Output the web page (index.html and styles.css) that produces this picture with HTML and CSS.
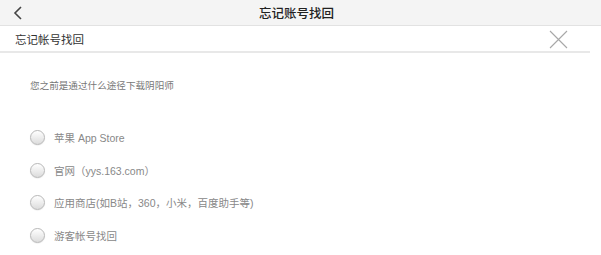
FILE: index.html
```html
<!DOCTYPE html>
<html lang="zh">
<head>
    <meta charset="UTF-8">
    <title>忘记账号找回</title>
    <link rel="stylesheet" href="styles.css">
</head>
<body>
    <div class="topbar">
        <span class="back">
            <svg width="10" height="14" viewBox="0 0 10 14"><path d="M8 1 L2 7 L8 13" fill="none" stroke="#444" stroke-width="1.6"/></svg>
        </span>
        <h1 class="title">忘记账号找回</h1>
    </div>

    <div class="panel-head">
        <span class="panel-title">忘记帐号找回</span>
        <span class="close">
            <svg width="19" height="19" viewBox="0 0 19 19"><path d="M1 1 L18 18 M18 1 L1 18" stroke="#a8a8a8" stroke-width="1.1"/></svg>
        </span>
    </div>

    <div class="content">
        <p class="question">您之前是通过什么途径下载阴阳师</p>
        <ul class="options">
            <li class="option"><span class="radio"></span>苹果 App Store</li>
            <li class="option"><span class="radio"></span>官网（yys.163.com）</li>
            <li class="option"><span class="radio"></span>应用商店(如B站，360，小米，百度助手等)</li>
            <li class="option"><span class="radio"></span>游客帐号找回</li>
        </ul>
    </div>
</body>
</html>
```

FILE: styles.css
```css
* {
    margin: 0;
    padding: 0;
    box-sizing: border-box;
}

body {
    background: #fff;
    font-family: "Liberation Sans", "Noto Sans CJK SC", sans-serif;
    width: 601px;
    height: 255px;
    overflow: hidden;
}

.topbar {
    position: relative;
    height: 26px;
    background: #f4f4f4;
    border-bottom: 1px solid #e2e2e2;
    display: flex;
    align-items: center;
    justify-content: center;
}

.back {
    position: absolute;
    left: 13px;
    top: 6px;
    display: flex;
}

.title {
    font-size: 12.5px;
    font-weight: 500;
    color: #222;
    margin-left: -8px;
}

.panel-head {
    height: 27px;
    width: 590px;
    border-bottom: 2px solid #e8e8e8;
    display: flex;
    align-items: center;
    justify-content: space-between;
    padding: 0 22px 0 15px;
}

.panel-title {
    font-size: 11.5px;
    color: #333;
}

.close {
    display: flex;
    margin-top: 2px;
}

.content {
    padding: 26px 0 0 30px;
}

.question {
    font-size: 9.6px;
    color: #777;
    line-height: 14px;
}

.options {
    list-style: none;
    margin-top: 28px;
}

.option {
    display: flex;
    align-items: center;
    height: 32.7px;
    font-size: 10.5px;
    color: #888;
}

.radio {
    width: 15px;
    height: 15px;
    border-radius: 50%;
    border: 1px solid #b8b8b8;
    background: linear-gradient(#ffffff, #dcdcdc);
    box-shadow: 0 0.5px 1px rgba(0, 0, 0, 0.1);
    margin-right: 9px;
}
```
